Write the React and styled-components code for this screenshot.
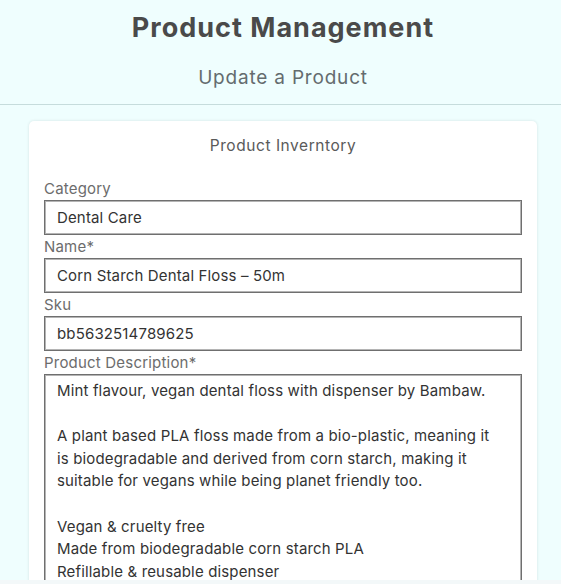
import React from "react";
import styled, { createGlobalStyle } from "styled-components";

const GlobalStyle = createGlobalStyle`
  html, body {
    margin: 0;
    padding: 0;
    background: #effefe;
    overflow: hidden;
  }
  body {
    font-family: "Inter", "Open Sans", sans-serif;
  }
  * { box-sizing: border-box; }
`;

const Page = styled.div`
  width: 566px;
  min-height: 584px;
  background: #effefe;
`;

const Header = styled.header`
  display: flex;
  flex-direction: column;
  align-items: center;
  padding: 12px 0 14px;
  border-bottom: 1px solid #c6dcdc;
`;

const Title = styled.h1`
  margin: 0;
  font-size: 27px;
  line-height: 32px;
  font-weight: 700;
  letter-spacing: 1px;
  color: #4a4a4a;
`;

const Subtitle = styled.h2`
  margin: 22px 0 0;
  font-size: 19px;
  line-height: 24px;
  font-weight: 400;
  letter-spacing: 0.8px;
  color: #646c6e;
`;

const Main = styled.main`
  padding: 16px 29px 0;
`;

const Card = styled.section`
  background: #ffffff;
  border-radius: 5px;
  box-shadow: 0 0 3px rgba(0, 40, 40, 0.12);
  padding: 13px 15px 40px;
  display: flex;
  flex-direction: column;
`;

const CardTitle = styled.h3`
  margin: 0 0 19px;
  text-align: center;
  font-size: 15.5px;
  line-height: 24px;
  font-weight: 400;
  letter-spacing: 0.55px;
  color: #5a5a5a;
`;

const Field = styled.label`
  display: flex;
  flex-direction: column;
`;

const LabelText = styled.span`
  font-size: 15px;
  line-height: 23px;
  letter-spacing: 0.2px;
  color: #6c6c6c;
`;

const inputBase = `
  width: 100%;
  font-family: "Inter", "Open Sans", sans-serif;
  font-size: 15px;
  letter-spacing: 0.15px;
  color: #333333;
  background: #ffffff;
  border: 1px solid #6f6f6f;
  box-shadow: inset 0 0 0 1px #b4b4b4;
  border-radius: 0;
  outline: none;
  margin: 0;
`;

const TextInput = styled.input`
  ${inputBase}
  height: 35px;
  padding: 0 12px;
`;

const TextArea = styled.textarea`
  ${inputBase}
  height: 230px;
  padding: 5px 12px;
  line-height: 22.6px;
  resize: none;
  overflow: hidden;
  white-space: pre;
`;

const BottomStrip = styled.div`
  position: fixed;
  left: 0;
  right: 0;
  bottom: 0;
  height: 4px;
  background: #f3f8f9;
`;

const description = `Mint flavour, vegan dental floss with dispenser by Bambaw.

A plant based PLA floss made from a bio-plastic, meaning it
is biodegradable and derived from corn starch, making it
suitable for vegans while being planet friendly too.

Vegan & cruelty free
Made from biodegradable corn starch PLA
Refillable & reusable dispenser`;

const fields = [
  { label: "Category", value: "Dental Care" },
  { label: "Name*", value: "Corn Starch Dental Floss – 50m" },
  { label: "Sku", value: "bb5632514789625" },
];

export default function App() {
  return (
    <Page>
      <GlobalStyle />
      <Header>
        <Title>Product Management</Title>
        <Subtitle>Update a Product</Subtitle>
      </Header>
      <Main>
        <Card>
          <CardTitle>Product Inverntory</CardTitle>
          {fields.map((f) => (
            <Field key={f.label}>
              <LabelText>{f.label}</LabelText>
              <TextInput type="text" defaultValue={f.value} />
            </Field>
          ))}
          <Field>
            <LabelText>Product Description*</LabelText>
            <TextArea defaultValue={description} />
          </Field>
        </Card>
      </Main>
      <BottomStrip />
    </Page>
  );
}
